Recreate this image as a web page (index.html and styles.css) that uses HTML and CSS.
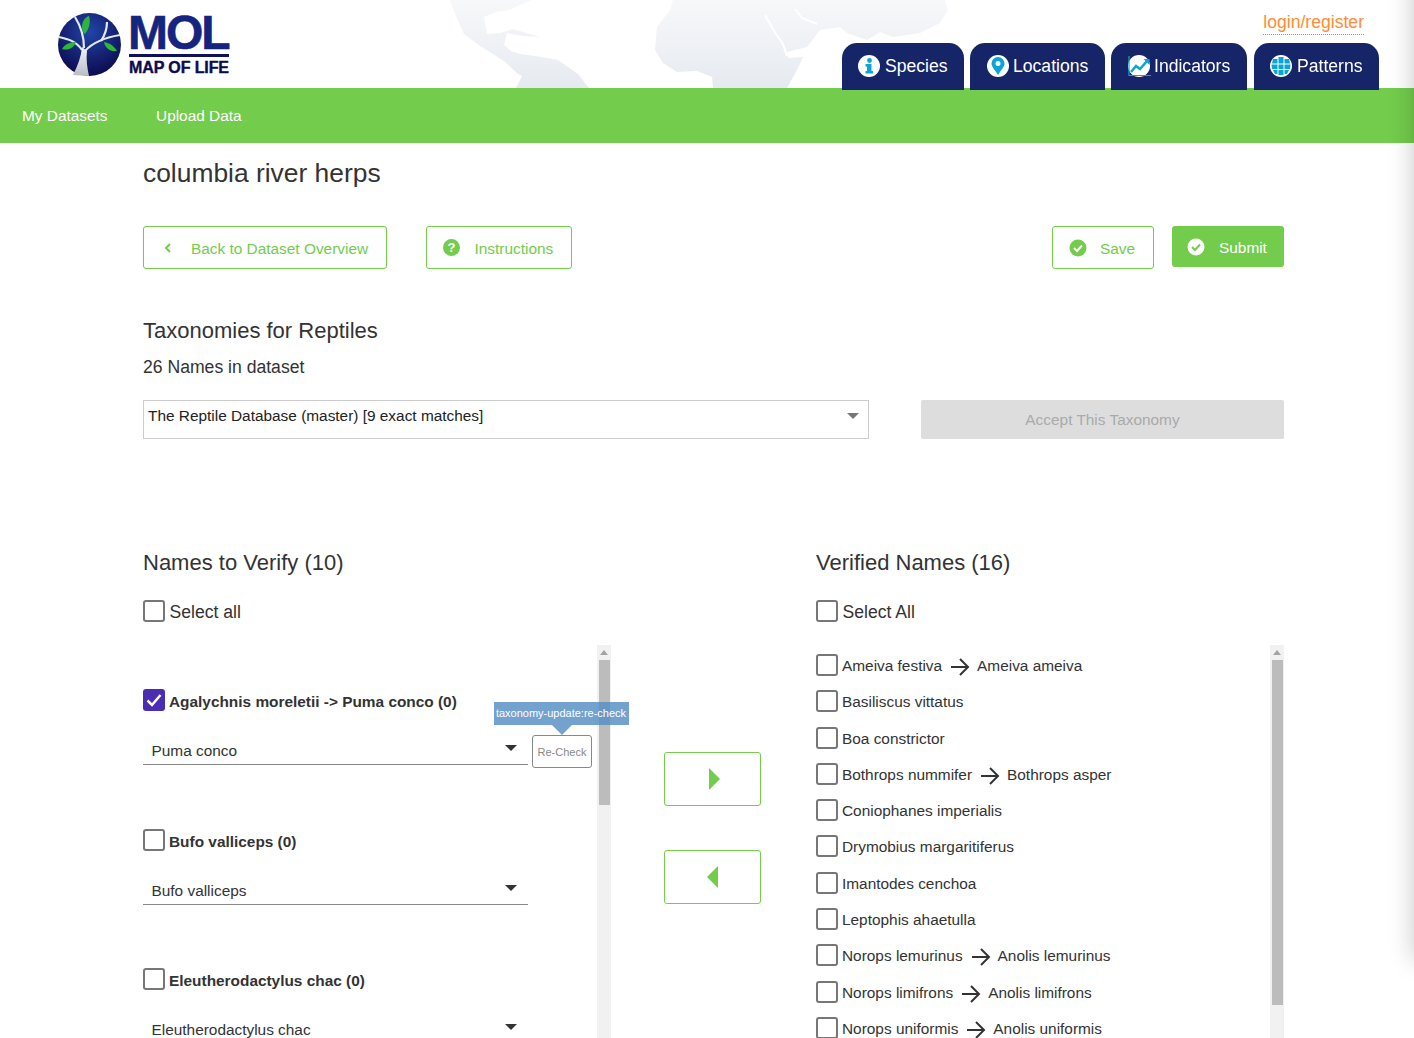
FILE: index.html
```html
<!DOCTYPE html>
<html lang="en">
<head>
    <meta charset="UTF-8">
    <title>Map of Life - Upload Data</title>
    <link rel="stylesheet" href="styles.css">
</head>
<body>
    <header class="site-header">
        <svg class="world-map" width="520" height="88" viewBox="0 0 520 88">
            <defs>
                <linearGradient id="mapFill" x1="0" y1="0" x2="0" y2="1">
                    <stop offset="0" stop-color="#f7f8fa"/>
                    <stop offset="1" stop-color="#e6eaf0"/>
                </linearGradient>
            </defs>
            <path fill="url(#mapFill)" d="M0 0 L5 14 L14 34 L30 46 L54 61 L68 74 L72 76 L66 88 L139 88 L128 74 L108 60 L92 57 L70 54 L61 51 L54 45 L57 33 L72 36 L90 37 L76 33 L63 29 L50 33 L37 34 L34 17 L46 12 L59 10 L81 0 Z"/>
            <path fill="url(#mapFill)" d="M223 0 L220 10 L207 27 L205 50 L213 63 L227 72 L247 71 L262 77 L263 88 L337 88 L347 70 L353 57 L338 58 L337 52 L357 47 L370 30 L390 27 L397 33 L417 40 L430 32 L443 37 L470 33 L490 23 L498 10 L495 0 Z"/>
            <path fill="none" stroke="#fff" stroke-width="2" d="M315 15 L326 34 L333 44 L337 56"/>
            <path fill="none" stroke="#fff" stroke-width="2" d="M345 9 L352 18 L367 24"/>
        </svg>

        <a class="logo" href="#">
            <svg class="logo-globe" width="63" height="63" viewBox="0 0 63 63">
                <defs>
                    <radialGradient id="globeFill" cx="0.5" cy="0.3" r="0.7">
                        <stop offset="0" stop-color="#2145a8"/>
                        <stop offset="1" stop-color="#0d0a4e"/>
                    </radialGradient>
                    <linearGradient id="trunkFill" x1="0" y1="0" x2="0" y2="1">
                        <stop offset="0" stop-color="#f2f4f8"/>
                        <stop offset="1" stop-color="#b9bcc4"/>
                    </linearGradient>
                </defs>
                <circle cx="31.500" cy="31.500" r="31.500" fill="url(#globeFill)"/>
                <g fill="none" stroke="#e3e7ee" stroke-width="2.200">
                    <path d="M24 37 C18 28 10 26 1 24"/>
                    <path d="M26 35 C26 24 22 12 17 4"/>
                    <path d="M27 38 C36 28 50 24 62 22"/>
                    <path d="M43 28 C47 22 49 16 49 9"/>
                </g>
                <path fill="url(#trunkFill)" d="M15 62 C20 52 23 44 24 34 L29 38 C28 46 29 54 31 63 Z"/>
                <path fill="#2fb53c" d="M24 14 C24 9 27 4 31 3 C33 9 31 16 27 21 C25 20 24 17 24 14 Z"/>
                <path fill="#2fb53c" d="M4 36 C7 31 12 29 18 29 C16 35 10 38 4 36 Z"/>
                <path fill="#2fb53c" d="M46 29 C52 30 56 33 59 38 C52 39 47 35 46 29 Z"/>
            </svg>
            <span class="logo-text">
                <span class="logo-mol">MOL</span>
                <span class="logo-rule"></span>
                <span class="logo-sub">MAP OF LIFE</span>
            </span>
        </a>

        <div class="header-right">
            <a class="login-link" href="#">login/register</a>
            <nav class="tabs">
                <a class="tab tab-species" href="#">
                    <svg class="tab-icon" width="22" height="22" viewBox="0 0 22 22">
                        <circle cx="11" cy="11" r="11" fill="#fff"/>
                        <circle cx="11.500" cy="5.500" r="2.400" fill="#0aa5d8"/>
                        <path fill="#0aa5d8" d="M7.500 9 H13.500 V16 H15 V18.500 H7.500 V16 H9 V11.500 H7.500 Z"/>
                    </svg>
                    Species
                </a>
                <a class="tab tab-locations" href="#">
                    <svg class="tab-icon" width="22" height="22" viewBox="0 0 22 22">
                        <circle cx="11" cy="11" r="11" fill="#fff"/>
                        <path fill="#0aa5d8" fill-rule="evenodd" d="M11 20 C8 15 4.500 12 4.500 8.500 A6.500 6.500 0 0 1 17.500 8.500 C17.500 12 14 15 11 20 Z M11 6 A2.500 2.500 0 1 0 11 11 A2.500 2.500 0 1 0 11 6 Z"/>
                    </svg>
                    Locations
                </a>
                <a class="tab tab-indicators" href="#">
                    <svg class="tab-icon" width="23" height="22" viewBox="0 0 23 22">
                        <circle cx="11" cy="11" r="11" fill="#fff"/>
                        <path fill="none" stroke="#0aa5d8" stroke-width="1.200" d="M1 1 V20.500 H23"/>
                        <path fill="none" stroke="#0aa5d8" stroke-width="2.500" d="M3 17 L8 11 L12 14 L19 6"/>
                        <path fill="#0aa5d8" d="M15.500 4 H21.500 V10 Z"/>
                    </svg>
                    Indicators
                </a>
                <a class="tab tab-patterns" href="#">
                    <svg class="tab-icon" width="22" height="22" viewBox="0 0 22 22">
                        <circle cx="11" cy="11" r="11" fill="#fff"/>
                        <path fill="#0aa5d8" d="M3 4 H7.500 V8.500 H2 Z M8.500 2 H13.500 V8.500 H8.500 Z M14.500 4 H19 L20 8.500 H14.500 Z M1.500 9.500 H7.500 V14 H2 Z M8.500 9.500 H13.500 V14 H8.500 Z M14.500 9.500 H20.500 L20 14 H14.500 Z M3 15 H7.500 V19 H5 Z M8.500 15 H13.500 V20 H8.500 Z M14.500 15 H19 L17 19 H14.500 Z"/>
                    </svg>
                    Patterns
                </a>
            </nav>
        </div>
    </header>

    <nav class="subnav">
        <a class="subnav-link" href="#">My Datasets</a>
        <a class="subnav-link" href="#">Upload Data</a>
    </nav>

    <main class="container">
        <h1 class="page-title">columbia river herps</h1>

        <div class="actions">
            <a class="btn btn-back" href="#">
                <svg class="btn-icon" width="18" height="18" viewBox="0 0 18 18">
                    <path fill="none" stroke="#73cc4c" stroke-width="2" d="M11 5 L7 9 L11 13"/>
                </svg>
                Back to Dataset Overview
            </a>
            <a class="btn btn-help" href="#">
                <span class="help-dot">?</span>
                Instructions
            </a>
            <a class="btn btn-save" href="#">
                <svg class="btn-icon" width="18" height="18" viewBox="0 0 18 18">
                    <circle cx="9" cy="9" r="8.500" fill="#73cc4c"/>
                    <path fill="none" stroke="#fff" stroke-width="2" d="M5 9 L8 12 L13 6.500"/>
                </svg>
                Save
            </a>
            <a class="btn btn-submit" href="#">
                <svg class="btn-icon" width="18" height="18" viewBox="0 0 18 18">
                    <circle cx="9" cy="9" r="8.500" fill="#fff"/>
                    <path fill="none" stroke="#73cc4c" stroke-width="2" d="M5 9 L8 12 L13 6.500"/>
                </svg>
                Submit
            </a>
        </div>

        <h2 class="section-title">Taxonomies for Reptiles</h2>
        <p class="name-count">26 Names in dataset</p>

        <div class="taxonomy-row">
            <div class="taxonomy-select">
                The Reptile Database (master) [9 exact matches]
                <span class="caret caret-grey"></span>
            </div>
            <button class="accept-btn">Accept This Taxonomy</button>
        </div>

        <div class="columns">
            <section class="column">
                <h2 class="section-title">Names to Verify (10)</h2>
                <label class="select-all"><span class="box"></span>Select all</label>
                <div class="panel">
                    <div class="verify-list">
                        <div class="verify-item">
                            <div class="verify-head">
                                <span class="box box-checked">
                                    <svg width="18" height="18" viewBox="0 0 18 18">
                                        <path fill="none" stroke="#fff" stroke-width="2.500" d="M2.500 9.500 L7 14 L15.500 4"/>
                                    </svg>
                                </span>
                                Agalychnis moreletii -&gt; Puma conco (0)
                            </div>
                            <div class="verify-select-row">
                                <div class="verify-select">Puma conco<span class="caret"></span></div>
                                <div class="recheck-wrap">
                                    <div class="tooltip">taxonomy-update:re-check</div>
                                    <button class="recheck">Re-Check</button>
                                </div>
                            </div>
                        </div>
                        <div class="verify-item">
                            <div class="verify-head"><span class="box"></span>Bufo valliceps (0)</div>
                            <div class="verify-select-row">
                                <div class="verify-select">Bufo valliceps<span class="caret"></span></div>
                            </div>
                        </div>
                        <div class="verify-item">
                            <div class="verify-head"><span class="box"></span>Eleutherodactylus chac (0)</div>
                            <div class="verify-select-row">
                                <div class="verify-select">Eleutherodactylus chac<span class="caret"></span></div>
                            </div>
                        </div>
                    </div>
                    <div class="scrollbar"><span class="scroll-arrow"></span><span class="scroll-thumb thumb-left"></span></div>
                </div>
            </section>

            <div class="move-buttons">
                <button class="move-btn"><span class="tri tri-right"></span></button>
                <button class="move-btn"><span class="tri tri-left"></span></button>
            </div>

            <section class="column">
                <h2 class="section-title">Verified Names (16)</h2>
                <label class="select-all"><span class="box"></span>Select All</label>
                <div class="panel">
                    <ul class="verified-list">
                        <li><span class="box"></span>Ameiva festiva<svg class="arrow" width="20" height="20" viewBox="0 0 20 20"><path d="M1 10 H18 M10 2 L18 10 L10 18"/></svg>Ameiva ameiva</li>
                        <li><span class="box"></span>Basiliscus vittatus</li>
                        <li><span class="box"></span>Boa constrictor</li>
                        <li><span class="box"></span>Bothrops nummifer<svg class="arrow" width="20" height="20" viewBox="0 0 20 20"><path d="M1 10 H18 M10 2 L18 10 L10 18"/></svg>Bothrops asper</li>
                        <li><span class="box"></span>Coniophanes imperialis</li>
                        <li><span class="box"></span>Drymobius margaritiferus</li>
                        <li><span class="box"></span>Imantodes cenchoa</li>
                        <li><span class="box"></span>Leptophis ahaetulla</li>
                        <li><span class="box"></span>Norops lemurinus<svg class="arrow" width="20" height="20" viewBox="0 0 20 20"><path d="M1 10 H18 M10 2 L18 10 L10 18"/></svg>Anolis lemurinus</li>
                        <li><span class="box"></span>Norops limifrons<svg class="arrow" width="20" height="20" viewBox="0 0 20 20"><path d="M1 10 H18 M10 2 L18 10 L10 18"/></svg>Anolis limifrons</li>
                        <li><span class="box"></span>Norops uniformis<svg class="arrow" width="20" height="20" viewBox="0 0 20 20"><path d="M1 10 H18 M10 2 L18 10 L10 18"/></svg>Anolis uniformis</li>
                    </ul>
                    <div class="scrollbar"><span class="scroll-arrow"></span><span class="scroll-thumb thumb-right"></span></div>
                </div>
            </section>
        </div>
    </main>

    <div class="edge-shadow"></div>
</body>
</html>
```

FILE: styles.css
```css
html, body {
    height: 1038px;
    overflow: hidden;
}

body {
    margin: 0;
    font-family: "Liberation Sans", Arial, sans-serif;
    color: #333;
    background: #fff;
}

a {
    text-decoration: none;
}

/* header */
.site-header {
    position: relative;
    display: flex;
    justify-content: space-between;
    height: 88px;
    padding: 0 35px 0 58px;
}

.world-map {
    position: absolute;
    top: 0;
    left: 450px;
}

.logo {
    position: relative;
    display: flex;
    gap: 8px;
    width: 172px;
    height: 63px;
    margin-top: 13px;
}

.logo-globe {
    flex: none;
}

.logo-text {
    display: flex;
    flex-direction: column;
    width: 101px;
}

.logo-mol {
    flex: none;
    height: 39px;
    margin-left: -1px;
    font-size: 48px;
    font-weight: bold;
    line-height: 40px;
    letter-spacing: -2px;
    color: #14247f;
    -webkit-text-stroke: 0.6px #14247f;
}

.logo-rule {
    flex: none;
    width: 100px;
    height: 3px;
    margin-top: 2px;
    background: #10105a;
}

.logo-sub {
    flex: none;
    margin-top: 3px;
    font-size: 16px;
    font-weight: bold;
    line-height: 16px;
    letter-spacing: -0.100px;
    white-space: nowrap;
    color: #0d0a4e;
    -webkit-text-stroke: 0.4px #0d0a4e;
}

.header-right {
    position: relative;
    display: flex;
    flex-direction: column;
    align-items: flex-end;
}

.login-link {
    margin: 11px 15px 0 0;
    padding-bottom: 1px;
    font-size: 17.600px;
    line-height: 22px;
    color: #ff8c37;
    border-bottom: 1px dotted #ff7a10;
}

.tabs {
    display: flex;
    gap: 6px;
    margin-top: 8px;
}

.tab {
    display: flex;
    align-items: center;
    gap: 4px;
    box-sizing: border-box;
    height: 47px;
    padding-bottom: 1px;
    font-size: 17.600px;
    color: #fff;
    background: #162567;
    border-radius: 15px 15px 0 0;
    position: relative;
    z-index: 1;
}

.tab-species { width: 122px; padding-left: 16px; gap: 5px; }
.tab-locations { width: 135px; padding-left: 17px; }
.tab-indicators { width: 136px; padding-left: 17px; gap: 3px; margin-right: 1px; }
.tab-patterns { width: 125px; padding-left: 16px; gap: 5px; }

.tab-icon {
    flex: none;
}

/* green bar */
.subnav {
    display: flex;
    gap: 48.500px;
    height: 55px;
    align-items: center;
    padding-left: 22px;
    background: #73cc4c;
}

.subnav-link {
    font-size: 15.400px;
    color: #fff;
}

/* main content */
.container {
    width: 1141px;
    margin-left: 143px;
}

.page-title {
    margin: 15px 0 0;
    font-size: 26.400px;
    line-height: 30px;
    font-weight: normal;
}

.actions {
    display: flex;
    align-items: flex-start;
    margin-top: 38px;
}

.btn {
    display: flex;
    align-items: center;
    box-sizing: border-box;
    height: 43px;
    padding-top: 2px;
    font-size: 15.400px;
    color: #73cc4c;
    border: 1px solid #73cc4c;
    border-radius: 3px;
    background: #fff;
}

.btn-back { width: 244px; padding-left: 15px; gap: 14px; }
.btn-help { width: 146px; padding-left: 16px; gap: 14.500px; margin-left: 39px; }
.btn-save { width: 102px; padding-left: 16px; gap: 13px; margin-left: auto; }

.btn-submit {
    width: 112px;
    height: 41px;
    padding-left: 15px;
    gap: 14px;
    margin-left: 18px;
    color: #fff;
    background: #73cc4c;
    border: none;
}

.btn-icon {
    flex: none;
    margin-top: -2px;
}

.help-dot {
    flex: none;
    width: 17px;
    height: 17px;
    margin-top: -2px;
    border-radius: 50%;
    background: #73cc4c;
    color: #fff;
    font-size: 13px;
    font-weight: bold;
    line-height: 17px;
    text-align: center;
}

.section-title {
    margin: 0;
    font-size: 22px;
    line-height: 26px;
    font-weight: normal;
}

.actions + .section-title {
    margin-top: 49px;
}

.name-count {
    margin: 12px 0 0;
    font-size: 17.600px;
    line-height: 22px;
}

.taxonomy-row {
    display: flex;
    justify-content: space-between;
    margin-top: 22px;
}

.taxonomy-select {
    position: relative;
    box-sizing: border-box;
    width: 726px;
    height: 39px;
    padding: 5px 4px;
    font-size: 15.400px;
    line-height: 19px;
    color: #222;
    border: 1px solid #ccc;
}

.caret {
    position: absolute;
    right: 11px;
    top: 6px;
    width: 0;
    height: 0;
    border-left: 6px solid transparent;
    border-right: 6px solid transparent;
    border-top: 6px solid #333;
}

.caret-grey {
    top: 12px;
    right: 9px;
    border-top-color: #777;
}

.accept-btn {
    width: 363px;
    height: 39px;
    font-family: inherit;
    font-size: 15.400px;
    color: #aaa;
    background: #ddd;
    border: none;
    border-radius: 2px;
}

.columns {
    display: grid;
    grid-template-columns: 468px 1fr 468px;
    margin-top: 111px;
}

.select-all {
    display: flex;
    align-items: flex-start;
    gap: 4.500px;
    height: 22px;
    margin-top: 24px;
    font-size: 17.600px;
    line-height: 24px;
}

.box {
    flex: none;
    display: block;
    box-sizing: border-box;
    width: 22px;
    height: 22px;
    border: 2px solid #777;
    border-radius: 3px;
    background: #fff;
}

.box-checked {
    background: #4a2db0;
    border-color: #4a2db0;
}

.box-checked svg {
    display: block;
}

.panel {
    display: flex;
    justify-content: space-between;
    height: 400px;
    margin-top: 23px;
}

.scrollbar {
    display: flex;
    flex-direction: column;
    align-items: center;
    width: 14px;
    background: #f1f1f1;
}

.scroll-arrow {
    width: 0;
    height: 0;
    margin: 5px 0 5px;
    border-left: 4px solid transparent;
    border-right: 4px solid transparent;
    border-top: none;
    border-bottom: 5px solid #a3a3a3;
}

.scroll-thumb {
    width: 11px;
    background: #bcbcbc;
}

.thumb-left { height: 145px; }
.thumb-right { height: 345px; }

/* names to verify */
.verify-list {
    width: 454px;
    padding-top: 44px;
}

.verify-item {
    height: 139.500px;
}

.verify-head {
    display: flex;
    align-items: flex-start;
    gap: 4px;
    height: 22px;
    font-size: 15.400px;
    line-height: 26px;
    font-weight: bold;
}

.verify-select-row {
    display: flex;
    align-items: flex-start;
    gap: 4px;
    margin-top: 24px;
}

.verify-select {
    position: relative;
    box-sizing: border-box;
    width: 385px;
    height: 30px;
    padding: 6px 0 0 8.500px;
    font-size: 15.400px;
    line-height: 20px;
    border-bottom: 1px solid #888;
}

.verify-select .caret {
    top: 10px;
}

.recheck-wrap {
    position: relative;
}

.recheck {
    display: block;
    box-sizing: border-box;
    width: 60px;
    height: 33px;
    padding: 0;
    font-family: inherit;
    font-size: 11px;
    color: #888;
    background: #fff;
    border: 1px solid #888;
    border-radius: 3px;
}

.tooltip {
    position: absolute;
    top: -33px;
    left: -38px;
    box-sizing: border-box;
    width: 135px;
    height: 23px;
    padding-right: 1px;
    font-size: 11px;
    line-height: 23px;
    text-align: center;
    white-space: nowrap;
    color: #fff;
    background: rgba(86, 142, 196, 0.82);
    z-index: 2;
}

.tooltip::after {
    content: "";
    position: absolute;
    top: 23px;
    left: 58px;
    border-left: 10px solid transparent;
    border-right: 10px solid transparent;
    border-top: 10px solid rgba(86, 142, 196, 0.82);
}

/* arrow buttons */
.move-buttons {
    display: flex;
    flex-direction: column;
    align-items: center;
    gap: 44px;
    padding: 202px 2px 0 0;
}

.move-btn {
    display: flex;
    align-items: center;
    justify-content: center;
    box-sizing: border-box;
    width: 97px;
    height: 54px;
    padding: 0;
    background: #fff;
    border: 1px solid #73cc4c;
    border-radius: 3px;
}

.tri {
    width: 0;
    height: 0;
    border-top: 11px solid transparent;
    border-bottom: 11px solid transparent;
}

.tri-right {
    margin-left: 4px;
    border-left: 11px solid #73cc4c;
}

.tri-left {
    border-right: 11px solid #73cc4c;
}

/* verified names */
.verified-list {
    list-style: none;
    margin: 0;
    padding: 9px 0 0;
    width: 454px;
}

.verified-list li {
    display: flex;
    align-items: flex-start;
    height: 22px;
    margin-bottom: 14.300px;
    font-size: 15.400px;
    line-height: 24px;
}

.verified-list .box {
    margin-right: 4px;
}

.arrow {
    flex: none;
    margin: 3px 7px 0 8px;
    fill: none;
    stroke: #333;
    stroke-width: 2;
}

/* faint shadow down the right edge of the window */
.edge-shadow {
    position: fixed;
    top: -40px;
    left: 1414px;
    width: 40px;
    height: 1000px;
    box-shadow: 0 0 26px rgba(0, 0, 0, 0.22);
    pointer-events: none;
}
```
